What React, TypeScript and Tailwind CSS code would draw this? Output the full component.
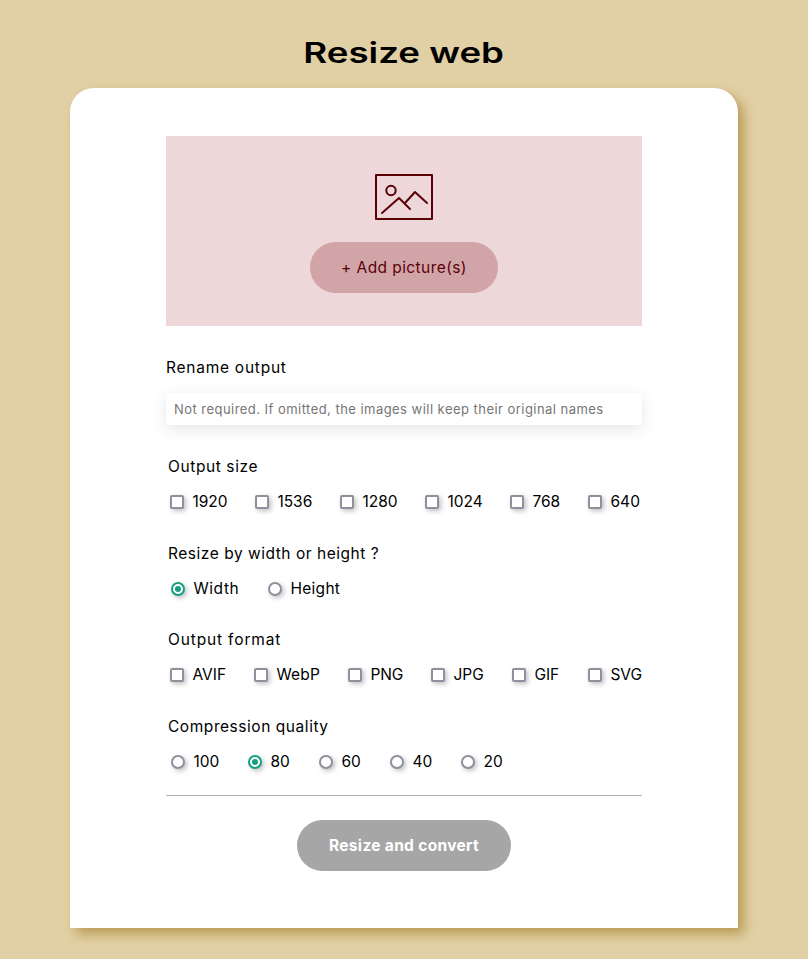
import React from "react";

type Option = { label: string; cell: string; track: string; checked?: boolean };

const sizes: Option[] = [
  { label: "1920", cell: "w-[85px]", track: "tracking-[0px]" },
  { label: "1536", cell: "w-[85px]", track: "tracking-[0px]" },
  { label: "1280", cell: "w-[85px]", track: "tracking-[0px]" },
  { label: "1024", cell: "w-[85px]", track: "tracking-[0px]" },
  { label: "768", cell: "w-[78px]", track: "tracking-[0px]" },
  { label: "640", cell: "w-[54px]", track: "tracking-[0.1px]" },
];

const directions: Option[] = [
  { label: "Width", cell: "w-[97px]", track: "tracking-[0.6px]", checked: true },
  { label: "Height", cell: "w-[90px]", track: "tracking-[0.3px]" },
];

const formats: Option[] = [
  { label: "AVIF", cell: "w-[84px]", track: "tracking-[0px]" },
  { label: "WebP", cell: "w-[94px]", track: "tracking-[0.2px]" },
  { label: "PNG", cell: "w-[83px]", track: "tracking-[-0.1px]" },
  { label: "JPG", cell: "w-[81px]", track: "tracking-[0px]" },
  { label: "GIF", cell: "w-[76px]", track: "tracking-[0px]" },
  { label: "SVG", cell: "w-[54px]", track: "tracking-[0px]" },
];

const qualities: Option[] = [
  { label: "100", cell: "w-[77px]", track: "tracking-[0px]" },
  { label: "80", cell: "w-[71px]", track: "tracking-[0.1px]", checked: true },
  { label: "60", cell: "w-[71px]", track: "tracking-[0.1px]" },
  { label: "40", cell: "w-[71px]", track: "tracking-[0.1px]" },
  { label: "20", cell: "w-[71px]", track: "tracking-[0.1px]" },
];

function Mark({ round, checked }: { round: boolean; checked?: boolean }) {
  const shape = round ? "rounded-full" : "rounded-[2px]";
  const color = checked ? "border-[#159f82]" : "border-[#8f8f9d]";
  return (
    <span className={`flex size-3.5 shrink-0 items-center justify-center border-2 bg-white shadow-[2px_2px_5px_rgba(0,0,0,0.25)] ${shape} ${color}`}>
      {checked && <span className="size-1.5 rounded-full bg-[#159f82]" />}
    </span>
  );
}

function Group({ title, titleTrack, options, round = false, height }: { title: string; titleTrack: string; options: Option[]; round?: boolean; height: string }) {
  return (
    <fieldset className={`${height} pl-0.5`}>
      <legend className={`h-6 leading-6 whitespace-nowrap ${titleTrack}`}>{title}</legend>
      <div className={`mt-[11px] flex h-6 ${round ? "pl-[3px]" : "pl-0.5"}`}>
        {options.map((o) => (
          <label key={o.label} className={`flex shrink-0 items-center gap-[8.4px] whitespace-nowrap leading-6 ${o.cell} ${o.track}`}>
            <Mark round={round} checked={o.checked} />
            <span>{o.label}</span>
          </label>
        ))}
      </div>
    </fieldset>
  );
}

export default function App() {
  return (
    <div className="flex h-[959px] w-full flex-col items-center overflow-hidden bg-[#e1d0a5] font-['Inter','Liberation_Sans',sans-serif] text-[15.5px] text-black">
      <h1 className="mt-[33px] h-10 origin-center scale-x-[1.31] text-[28px] leading-10 font-semibold whitespace-nowrap">Resize web</h1>
      <main className="mt-[15px] h-[840px] w-[668px] rounded-t-3xl bg-white px-24 pt-12 shadow-[6px_6px_12px_#b99b55]">
        <section className="flex h-[190px] flex-col items-center bg-[#edd7d8] pt-[38px] text-[#5c0007]">
          <svg className="h-[46px] w-[58px]" viewBox="0 0 58 46" fill="none" stroke="currentColor" strokeWidth="2" strokeLinecap="round" strokeLinejoin="round">
            <path d="M1 1h56v44H1z" />
            <circle cx="16" cy="16.5" r="4.7" />
            <path d="M7 39 24 24l11 11M30 29l10-11 12 11" />
          </svg>
          <button className="mt-[22px] h-[51px] w-[188px] rounded-full bg-[#d1a5a8] pt-px tracking-[0.42px] whitespace-nowrap">+ Add picture(s)</button>
        </section>
        <label className="mt-[30px] block h-6 leading-6 tracking-[0.75px]">Rename output</label>
        <input
          className="mt-[13px] block h-8 w-full bg-white px-2 text-[13px] tracking-[0.46px] shadow-[0_4px_16px_rgba(0,0,0,0.1)] outline-none placeholder:text-[#757575]"
          placeholder="Not required. If omitted, the images will keep their original names"
        />
        <div className="mt-[30px]">
          <Group title="Output size" titleTrack="tracking-[0.6px]" options={sizes} height="h-[87px]" />
          <Group title="Resize by width or height ?" titleTrack="tracking-[0.53px]" options={directions} round height="h-[86px]" />
          <Group title="Output format" titleTrack="tracking-[0.85px]" options={formats} height="h-[87px]" />
          <Group title="Compression quality" titleTrack="tracking-[0.55px]" options={qualities} round height="h-[80px]" />
        </div>
        <hr className="border-t border-[#afafaf]" />
        <button className="mx-auto mt-6 block h-[51px] w-[214px] rounded-full bg-[#a6a6a6] pt-px font-bold tracking-[0.32px] whitespace-nowrap text-white">Resize and convert</button>
      </main>
    </div>
  );
}
